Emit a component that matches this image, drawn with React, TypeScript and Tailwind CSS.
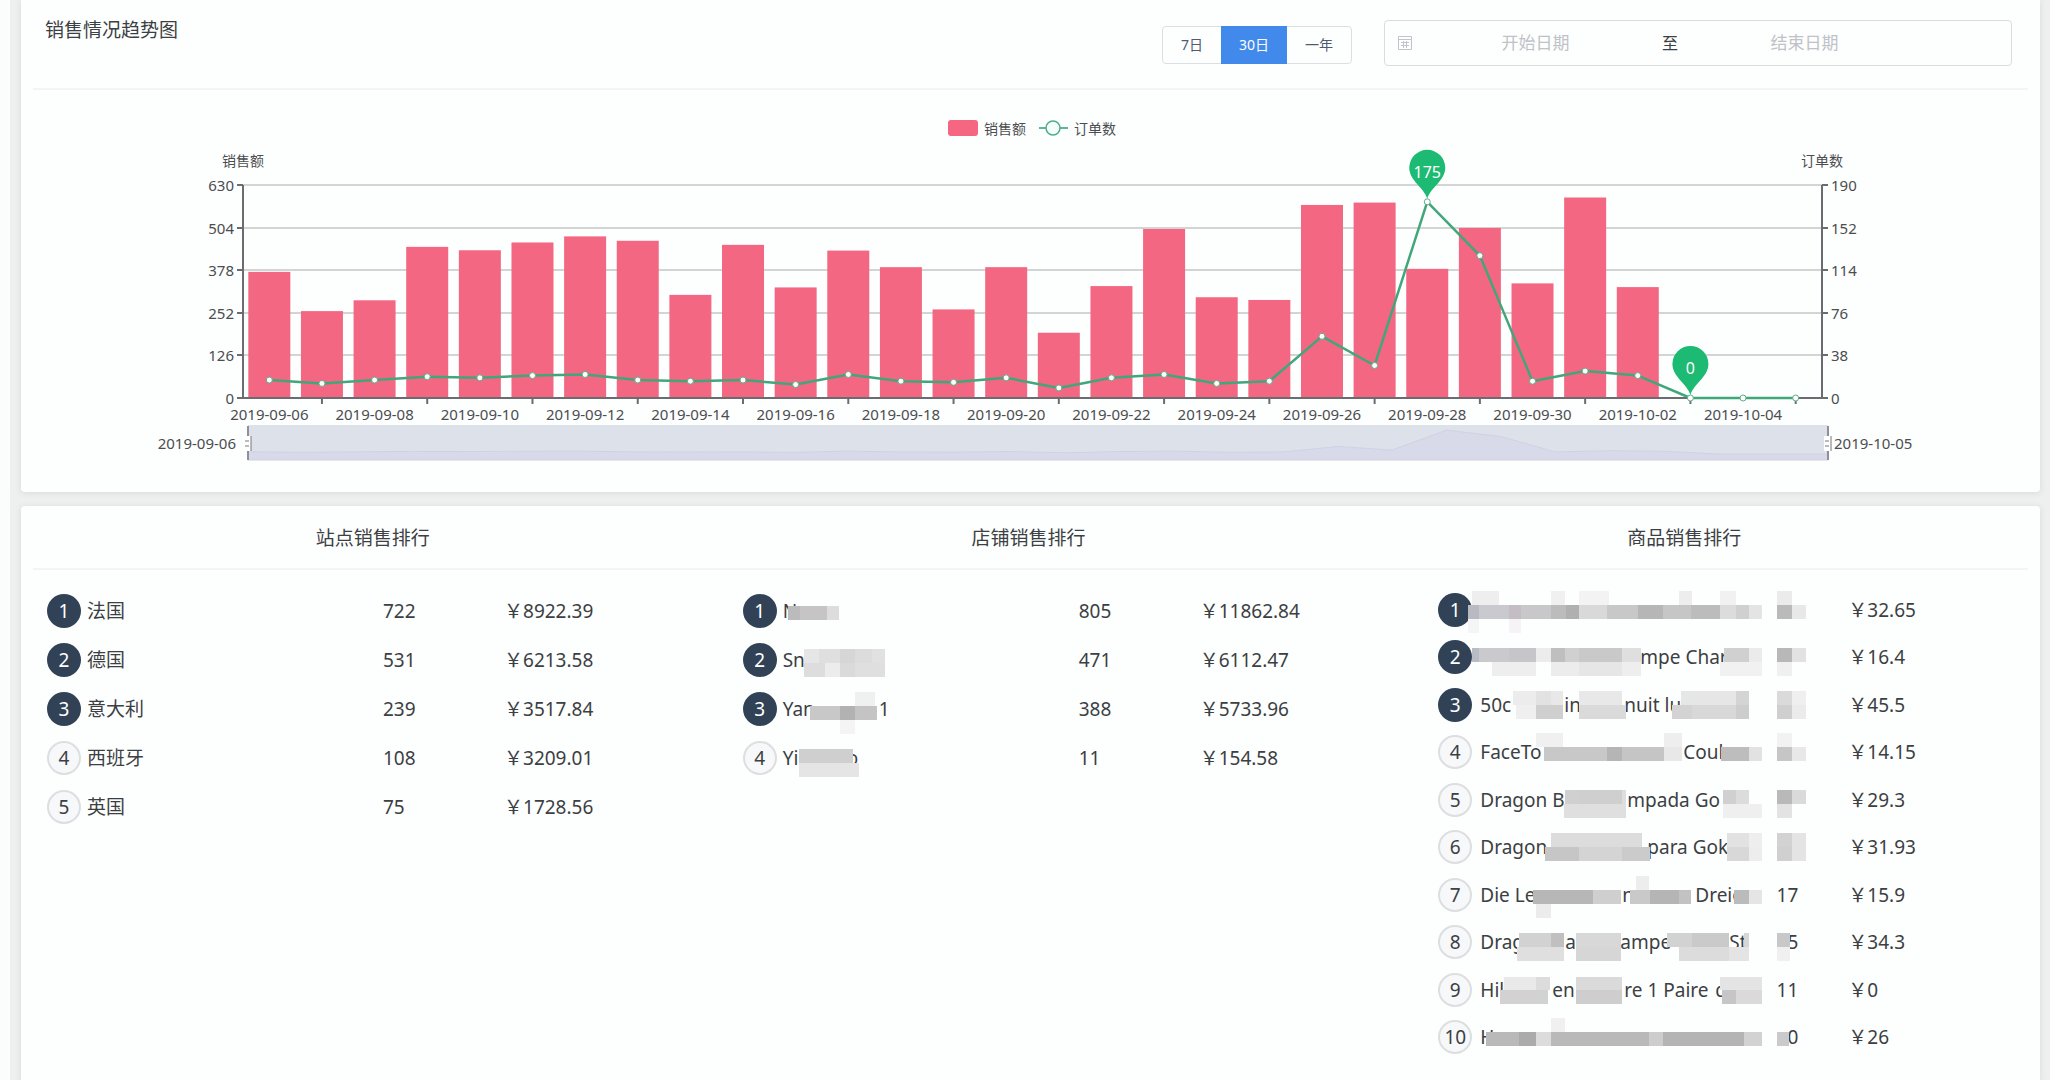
import React, { useState } from 'react';
import clsx from 'clsx';

type Tile = [from: number, to: number, color: string];

interface Strip {
  y: number;
  h: number;
  tiles: Tile[];
}

interface RankRow {
  // text pieces of the name, each with the width of its slot (0 = natural width)
  name: [string, number][];
  count: string;
  amount: string;
  mask?: Strip[];
}

const SALES = [
  373, 257, 289, 447, 437, 460, 478, 465, 305, 453, 327, 436, 387, 262, 387,
  193, 331, 500, 298, 290, 571, 578, 382, 503, 339, 593, 328, 0, 0, 0,
];

const ORDERS = [
  16, 13, 16, 19, 18, 20, 21, 16, 15, 16, 12, 21, 15, 14, 18,
  9, 18, 21, 13, 15, 55, 29, 175, 127, 15, 24, 20, 0, 0, 0,
];

const DATES = SALES.map((_, i) => {
  const day = new Date(Date.UTC(2019, 8, 6 + i));
  return day.toISOString().slice(0, 10);
});

const SITES: RankRow[] = [
  { name: [['法国', 0]], count: '722', amount: '8922.39' },
  { name: [['德国', 0]], count: '531', amount: '6213.58' },
  { name: [['意大利', 0]], count: '239', amount: '3517.84' },
  { name: [['西班牙', 0]], count: '108', amount: '3209.01' },
  { name: [['英国', 0]], count: '75', amount: '1728.56' },
];

const SHOPS: RankRow[] = [
  {
    name: [['N', 0]], count: '805', amount: '11862.84',
    mask: [{ y: 15, h: 14, tiles: [[5, 17, '#bbbbbb'], [17, 44, '#c5c5c5'], [44, 56, '#dddddd']] }],
  },
  {
    name: [['Sn', 0]], count: '471', amount: '6112.47',
    mask: [
      { y: 9, h: 14, tiles: [[21, 36, '#e6e6e6'], [36, 57, '#dfdfdf'], [57, 72, '#d6d6d6'], [72, 89, '#dcdcdc'], [89, 102, '#e1e1e1']] },
      { y: 23, h: 14, tiles: [[21, 42, '#dddddd'], [42, 57, '#ececec'], [57, 72, '#dadada'], [72, 102, '#dfdfdf']] },
    ],
  },
  {
    name: [['Yan', 96], ['1', 0]], count: '388', amount: '5733.96',
    mask: [
      { y: 3, h: 14, tiles: [[72, 92, '#f0f0f0']] },
      { y: 17, h: 14, tiles: [[27, 57, '#c8c8c8'], [57, 72, '#b2b2b2'], [72, 94, '#c4c4c4']] },
      { y: 31, h: 14, tiles: [[57, 72, '#f4f4f4']] },
    ],
  },
  {
    name: [['Yi', 64], ['o', 0]], count: '11', amount: '154.58',
    mask: [
      { y: 11, h: 14, tiles: [[16, 70, '#cfcfcf']] },
      { y: 25, h: 14, tiles: [[16, 76, '#e5e5e5']] },
    ],
  },
];

const GOODS: RankRow[] = [
  {
    name: [['', 0]], count: '', amount: '32.65',
    mask: [
      { y: 1, h: 14, tiles: [[-8, 19, '#eeeeef'], [71, 85, '#f0f0f0'], [99, 129, '#f3f3f3'], [199, 212, '#ededed'], [240, 256, '#f1f1f1'], [297, 312, '#ebebeb']] },
      { y: 15, h: 14, tiles: [[-12, -1, '#b8b9c1'], [-1, 29, '#c9c9cf'], [29, 41, '#c4bdc4'], [41, 71, '#c8c8cb'], [71, 86, '#bcbcbc'], [86, 99, '#b0b0b0'], [99, 127, '#d8d9d8'], [127, 158, '#c8c8c8'], [158, 183, '#b6b6b6'], [183, 211, '#c6c6c6'], [211, 240, '#bcbcbc'], [240, 256, '#dcdcdc'], [256, 269, '#d0d0d0'], [269, 282, '#e4e4e4'], [297, 312, '#bababa'], [312, 326, '#e8e8e8']] },
      { y: 29, h: 14, tiles: [[-12, -1, '#f5f5f7'], [29, 41, '#f5f3f5']] },
    ],
  },
  {
    name: [['', 160], ['mpe Char', 0]], count: '', amount: '16.4',
    mask: [
      { y: 11, h: 14, tiles: [[-8, -1, '#b9bcc4'], [-1, 29, '#cacace'], [29, 56, '#c6c6ca'], [56, 71, '#ececec'], [71, 85, '#bfbfbf'], [85, 99, '#d0d0d0'], [99, 142, '#c9c9c9'], [142, 161, '#dfdfdf'], [244, 269, '#d0d0d0'], [269, 282, '#ebebeb'], [297, 312, '#b8b8b8'], [312, 326, '#e2e2e2']] },
      { y: 25, h: 14, tiles: [[12, 56, '#eeeeee'], [71, 99, '#ececec'], [99, 142, '#e6e6e6'], [142, 161, '#eeeeee'], [240, 282, '#f1f1f1'], [297, 312, '#f0f0f0']] },
    ],
  },
  {
    name: [['50c', 84], ['in', 60], ['nuit lu', 0]], count: '', amount: '45.5',
    mask: [
      { y: 6, h: 14, tiles: [[33, 56, '#ececec'], [56, 71, '#e2e2e2'], [71, 83, '#e8e8e8'], [99, 142, '#e8e8e8'], [201, 256, '#e6e6e6'], [256, 269, '#d4d4d4'], [297, 312, '#dadada'], [312, 326, '#efefef']] },
      { y: 20, h: 14, tiles: [[36, 56, '#efefef'], [56, 83, '#cfcfcf'], [99, 146, '#dadada'], [192, 212, '#d3d3d3'], [212, 256, '#d8d8d8'], [256, 269, '#cdcdcd'], [297, 312, '#cfcfcf'], [312, 326, '#ebebeb']] },
    ],
  },
  {
    name: [['FaceTo', 203], ['Coul', 0]], count: '', amount: '14.15',
    mask: [
      { y: 1, h: 14, tiles: [[56, 83, '#f0f0f0'], [184, 202, '#eeeeee'], [297, 312, '#f2f2f2']] },
      { y: 15, h: 14, tiles: [[64, 127, '#c8c8c8'], [127, 142, '#b5b5b5'], [142, 184, '#c5c5c5'], [184, 202, '#e8e8e8'], [241, 269, '#bdbdbd'], [269, 282, '#e2e2e2'], [297, 312, '#c6c6c6'], [312, 326, '#e8e8e8']] },
    ],
  },
  {
    name: [['Dragon Ba', 147], ['mpada Go', 0]], count: '', amount: '29.3',
    mask: [
      { y: 10, h: 14, tiles: [[85, 99, '#d0d0d0'], [99, 142, '#cfcfcf'], [142, 146, '#dedede'], [243, 256, '#d0d0d0'], [256, 269, '#dcdcdc'], [297, 312, '#b9b9b9'], [312, 326, '#dadada']] },
      { y: 24, h: 14, tiles: [[84, 146, '#dfdfdf'], [243, 282, '#efefef'], [297, 312, '#e3e3e3']] },
    ],
  },
  {
    name: [['Dragon', 167], ['para Gok', 0]], count: '', amount: '31.93',
    mask: [
      { y: 6, h: 14, tiles: [[71, 162, '#dcdcdc'], [247, 269, '#e2e2e2'], [269, 282, '#eeeeee'], [297, 312, '#d2d2d2'], [312, 326, '#e4e4e4']] },
      { y: 20, h: 14, tiles: [[65, 99, '#c6c6c6'], [99, 142, '#d4d4d4'], [142, 170, '#cbcbcb'], [247, 269, '#d8d8d8'], [269, 282, '#ededed'], [297, 312, '#d0d0d0'], [312, 326, '#e4e4e4']] },
    ],
  },
  {
    name: [['Die Le', 142], ['n', 73], ['Dreie', 0]], count: '17', amount: '15.9',
    mask: [
      { y: 1, h: 14, tiles: [[156, 169, '#ededed']] },
      { y: 15, h: 14, tiles: [[53, 113, '#b7b7b7'], [113, 141, '#cfcfcf'], [150, 170, '#c9c9c9'], [170, 199, '#b5b5b5'], [199, 211, '#c2c2c2'], [254, 269, '#bbbbbb'], [269, 282, '#e5e5e5']] },
      { y: 29, h: 14, tiles: [[56, 71, '#ececec']] },
    ],
  },
  {
    name: [['Drag', 85], ['a', 55], ['ampe', 109], ['St', 0]], count: '5', amount: '34.3',
    mask: [
      { y: 11, h: 14, tiles: [[39, 71, '#d2d2d2'], [71, 84, '#c0c0c0'], [96, 141, '#d8d8d8'], [187, 212, '#d2d2d2'], [212, 249, '#cacaca'], [264, 269, '#d6d6d6'], [297, 310, '#c8c8c8']] },
      { y: 25, h: 14, tiles: [[37, 84, '#dfdfdf'], [96, 141, '#d6d6d6'], [199, 249, '#dcdcdc'], [249, 269, '#e4e4e4'], [297, 310, '#f0f0f0']] },
    ],
  },
  {
    name: [['Hil', 72], ['en', 72], ['re 1 Paire', 91], ['d', 0]], count: '11', amount: '0',
    mask: [
      { y: 7, h: 13, tiles: [[24, 56, '#e9e9e9'], [56, 70, '#dcdcdc'], [96, 142, '#dadada'], [240, 282, '#e4e4e4']] },
      { y: 20, h: 14, tiles: [[20, 68, '#d2d2d2'], [96, 142, '#cecece'], [242, 256, '#c6c6c6'], [256, 282, '#dadada']] },
    ],
  },
  {
    name: [['H', 0]], count: '0', amount: '26',
    mask: [
      { y: 1, h: 14, tiles: [[71, 85, '#f0f0f0']] },
      { y: 15, h: 14, tiles: [[6, 39, '#b9b9b9'], [39, 56, '#ababab'], [56, 71, '#dcdcdc'], [71, 169, '#b9b9b9'], [169, 183, '#cdcdcd'], [183, 264, '#b4b4b4'], [264, 282, '#d2d2d2'], [297, 309, '#cacaca']] },
    ],
  },
];

const RANGES = ['7日', '30日', '一年'];

// Chart geometry, in viewBox units
const LEFT = 222;
const RIGHT = 1801;
const TOP = 95;
const BOTTOM = 308;
const BAND = (RIGHT - LEFT) / SALES.length;

const xAt = (i: number) => LEFT + BAND * (i + 0.5);
const salesY = (v: number) => BOTTOM - (v / 630) * (BOTTOM - TOP);
const ordersY = (v: number) => BOTTOM - (v / 190) * (BOTTOM - TOP);
const miniY = (v: number) => 364 - (v / 190) * 26;

const Pin = ({ index }: { index: number }) => (
  <g transform={`translate(${xAt(index)} ${ordersY(ORDERS[index])})`}>
    <path d="M0 -3 C-3 -14 -18 -21 -18 -34 A18 18 0 0 1 18 -34 C18 -21 3 -14 0 -3Z" fill="#1cba72" />
    <text y={-24} textAnchor="middle" fill="#fff" fontSize={16}>{ORDERS[index]}</text>
  </g>
);

const Handle = ({ x }: { x: number }) => (
  <g>
    <path d={`M${x} 336V370`} stroke="#8d9096" strokeWidth={2} />
    <rect x={x - 4} y={346} width={7} height={15} rx={1} fill="#fff" />
    <path d={`M${x - 3} 351H${x + 1}M${x - 3} 356H${x + 1}M${x + 3} 346V361`} stroke="#777" strokeWidth={1} />
  </g>
);

const TrendChart = () => {
  const steps = [0, 1, 2, 3, 4, 5];
  const line = ORDERS.map((v, i) => `${xAt(i)},${ordersY(v)}`).join(' ');
  const mini = ORDERS.map((v, i) => `${227 + (i * 1580) / 29},${miniY(v)}`).join(' ');

  return (
    <svg viewBox="0 0 2019 402" className="block w-full h-auto" fill="#4b4d50" fontSize={15}>
      {/* Legend */}
      <rect x={927} y={30} width={30} height={16} rx={3} fill="#f56681" />
      <text x={963} y={44} fontSize={14}>销售额</text>
      <path d="M1018 38H1047" stroke="#5fb894" strokeWidth={2} />
      <circle cx={1032} cy={38} r={7} fill="#f4fffb" stroke="#4fae88" strokeWidth={1.5} />
      <text x={1053} y={44} fontSize={14}>订单数</text>

      {/* Axis names */}
      <text x={LEFT} y={76} fontSize={14} textAnchor="middle">销售额</text>
      <text x={RIGHT} y={76} fontSize={14} textAnchor="middle">订单数</text>

      {/* Split lines and scales */}
      {steps.map((s) => {
        const y = Math.round(BOTTOM - (s * (BOTTOM - TOP)) / 5);
        return (
          <g key={s}>
            {s > 0 && <path d={`M${LEFT} ${y}H${RIGHT}`} stroke="#d3d5d5" strokeWidth={2} />}
            <path d={`M${LEFT - 6} ${y}H${LEFT}M${RIGHT} ${y}H${RIGHT + 6}`} stroke="#6a6c6f" strokeWidth={2} />
            <text x={LEFT - 9} y={y + 6} textAnchor="end">{s * 126}</text>
            <text x={RIGHT + 9} y={y + 6}>{s * 38}</text>
          </g>
        );
      })}

      {SALES.map((v, i) => (
        <rect key={DATES[i]} x={xAt(i) - 21} y={salesY(v)} width={42} height={BOTTOM - salesY(v)} fill="#f36782" />
      ))}

      <path d={`M${LEFT} ${TOP}V${BOTTOM}H${RIGHT}V${TOP}`} fill="none" stroke="#6a6c6f" strokeWidth={2} />
      {DATES.map((d, i) =>
        i % 2 === 0 ? (
          <text key={d} x={xAt(i)} y={330} textAnchor="middle">{d}</text>
        ) : (
          <path key={d} d={`M${xAt(i)} ${BOTTOM}v6`} stroke="#6a6c6f" strokeWidth={2} />
        )
      )}

      <polyline points={line} fill="none" stroke="#42a67b" strokeWidth={2.5} strokeLinejoin="round" />
      {ORDERS.map((v, i) => (
        <circle key={DATES[i]} cx={xAt(i)} cy={ordersY(v)} r={3} fill="#fff" stroke="#5fae88" strokeWidth={1} />
      ))}
      <Pin index={22} />
      <Pin index={27} />

      {/* Data zoom */}
      <rect x={227} y={335} width={1580} height={35} fill="#dde2ea" />
      <polygon points={`227,370 ${mini} 1807,370`} fill="#d8daea" />
      <polyline points={mini} fill="none" stroke="#d0d2e4" strokeWidth={1} />
      <path d="M227 370H1807" stroke="#cfd1de" strokeWidth={1} />
      <Handle x={227} />
      <Handle x={1807} />
      <text x={215} y={359} textAnchor="end">{DATES[0]}</text>
      <text x={1813} y={359}>{DATES[DATES.length - 1]}</text>
    </svg>
  );
};

const CalendarIcon = () => (
  <svg viewBox="0 0 16 16" className="size-4 shrink-0" fill="none" stroke="#c0c4cc" strokeWidth={1}>
    <path d="M1.5 1.5h13v13h-13zM1.5 4.5h13M4 7.5h8M4 10.5h8M6.5 6v7M9.5 6v7" />
  </svg>
);

const RankList = ({ rows, compact = false }: { rows: RankRow[]; compact?: boolean }) => (
  <ol className={clsx('grid content-start', compact ? 'auto-rows-fr min-h-[475px]' : 'auto-rows-[49px]')}>
    {rows.map((row, i) => (
      <li
        key={i}
        className={clsx(
          'grid items-center pl-0.5',
          compact ? 'grid-cols-[338px_72px_1fr]' : 'grid-cols-[336px_121px_1fr]'
        )}
      >
        <div className={clsx('flex items-center min-w-0', compact ? 'gap-2' : 'gap-1.5')}>
          <span
            className={clsx(
              'size-[34px] shrink-0 rounded-full flex items-center justify-center',
              i < 3 ? 'bg-[#314256] text-white' : 'border-2 border-[#dcdee0] bg-[#f7f8f9]'
            )}
          >
            {i + 1}
          </span>
          <div className="relative flex items-center h-10 whitespace-pre">
            {row.name.map(([text, width], n) => (
              <span key={n} style={width ? { width } : undefined}>{text}</span>
            ))}
            {row.mask && (
              <svg width={330} height={40} className="absolute left-0 top-0 overflow-visible z-10" shapeRendering="crispEdges">
                {row.mask.map((strip) =>
                  strip.tiles.map(([from, to, color]) => (
                    <rect key={`${strip.y}-${from}`} x={from} y={strip.y} width={to - from} height={strip.h} fill={color} />
                  ))
                )}
              </svg>
            )}
          </div>
        </div>
        <span className={clsx(compact && 'w-[22px] text-right')}>{row.count}</span>
        <span>￥{row.amount}</span>
      </li>
    ))}
  </ol>
);

const App: React.FC = () => {
  const [range, setRange] = useState('30日');

  return (
    <div className="min-h-screen flex bg-[#fbfdfc] pl-2.5 text-[#3c3f43] text-[19px] leading-6 [font-family:'Noto_Sans','Noto_Sans_CJK_SC',sans-serif]">
      <div className="flex-1 flex flex-col gap-3.5 bg-[#eeefef] pl-[11px] pr-2.5">
        {/* Sales trend */}
        <section className="bg-[#fdfefe] rounded-b shadow-[0_1px_6px_#d8dada]">
          <header className="mx-3 pl-3 pr-4 pt-5 pb-[22px] flex items-start justify-between border-b-2 border-[#f3f5f5]">
            <h2 className="leading-5">销售情况趋势图</h2>
            <div className="flex items-end gap-8">
              <div className="flex h-[38px] mb-0.5 text-sm border border-[#dcdfe2] rounded">
                {RANGES.map((r) => (
                  <button
                    key={r}
                    onClick={() => setRange(r)}
                    className={clsx(
                      '-my-px px-[18px]',
                      r === range ? 'bg-[#418aeb] text-white' : 'text-[#515a6e]'
                    )}
                  >
                    {r}
                  </button>
                ))}
              </div>
              <div className="flex items-center h-[46px] w-[628px] pl-3 pr-[84px] border border-[#d9dcde] rounded text-[17px]">
                <CalendarIcon />
                <input
                  aria-label="开始日期"
                  placeholder="开始日期"
                  className="flex-1 min-w-0 text-center bg-transparent outline-none placeholder:text-[#bfc2c7]"
                />
                <span className="px-1 text-base">至</span>
                <input
                  aria-label="结束日期"
                  placeholder="结束日期"
                  className="flex-1 min-w-0 text-center bg-transparent outline-none placeholder:text-[#bfc2c7]"
                />
              </div>
            </div>
          </header>
          <TrendChart />
        </section>

        {/* Rankings */}
        <section className="flex-1 bg-[#fdfefe] rounded-t shadow-[0_1px_6px_#d8dada]">
          <header className="mx-3 pl-3 pr-4 pt-5 pb-[18px] grid grid-cols-3 text-center border-b-2 border-[#f3f5f5]">
            <h2>站点销售排行</h2>
            <h2>店铺销售排行</h2>
            <h2>商品销售排行</h2>
          </header>
          <div className="pl-6 pr-7 pt-4 pb-5 grid grid-cols-[656fr_656fr_576fr] gap-10">
            <RankList rows={SITES} />
            <RankList rows={SHOPS} />
            <RankList rows={GOODS} compact />
          </div>
        </section>
      </div>
    </div>
  );
};

export default App;
